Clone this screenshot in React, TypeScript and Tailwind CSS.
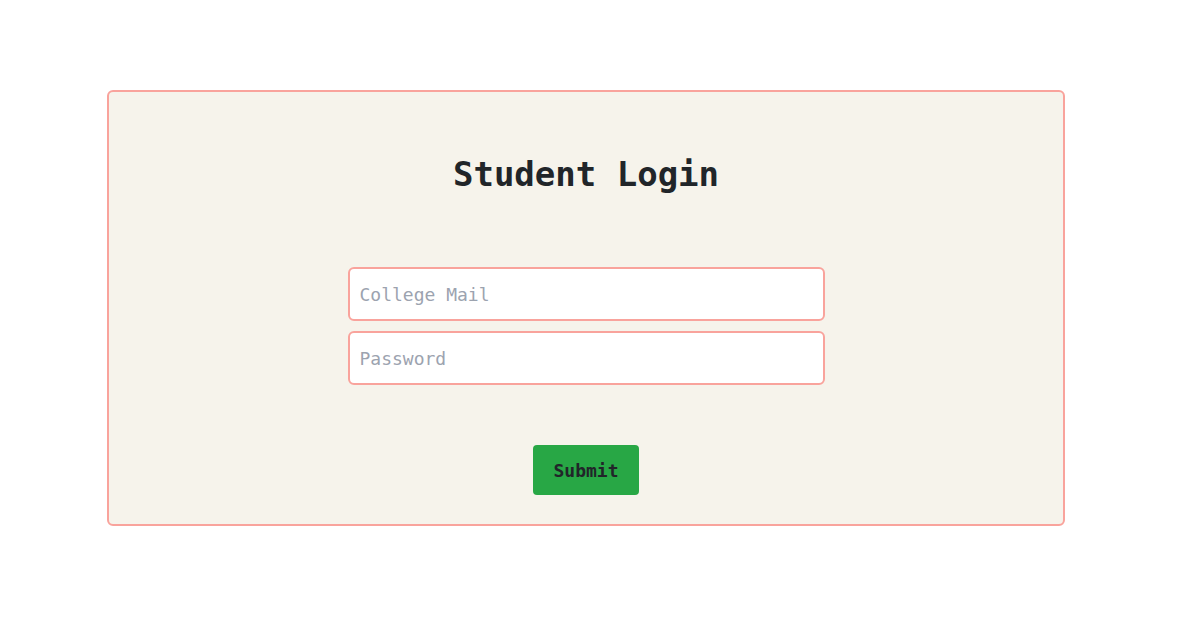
export default function App() {
  return (
    <div className="min-h-[626px] bg-white pt-[90px] font-['DejaVu_Sans_Mono',monospace]">
      <div className="ml-[107px] w-[958px] h-[436px] border-2 border-[#f9a39c] rounded-md bg-[#f6f3eb] flex flex-col items-center pt-[62px]">
        <h1 className="text-[34px] leading-[40px] font-bold text-[#212529]">Student Login</h1>
        <form className="flex flex-col items-center mt-[73px]" onSubmit={(e) => e.preventDefault()}>
          <div className="flex flex-col gap-[10px]">
            <input
              type="email"
              placeholder="College Mail"
              className="w-[477px] h-[54px] border-2 border-[#f9a39c] rounded-md bg-white px-[10px] text-[18px] text-[#212529] placeholder:text-[#9ca3af] outline-none"
            />
            <input
              type="password"
              placeholder="Password"
              className="w-[477px] h-[54px] border-2 border-[#f9a39c] rounded-md bg-white px-[10px] text-[18px] text-[#212529] placeholder:text-[#9ca3af] outline-none"
            />
          </div>
          <button
            type="submit"
            className="mt-[60px] w-[106px] h-[50px] rounded-[4px] bg-[#28a745] text-[18px] font-bold text-[#212529]"
          >
            Submit
          </button>
        </form>
      </div>
    </div>
  );
}
